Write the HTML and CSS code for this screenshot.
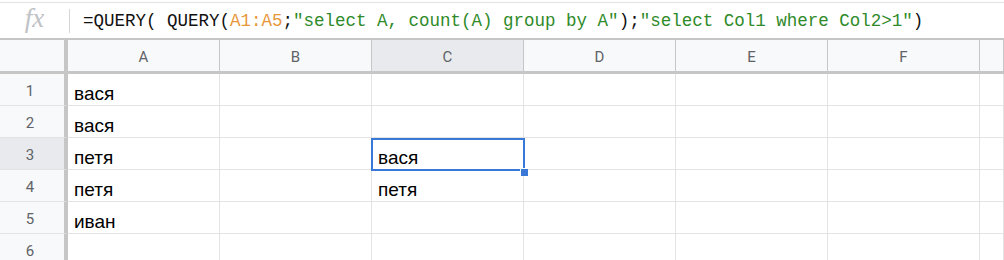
FILE: index.html
```html
<!DOCTYPE html>
<html lang="ru">
<head>
  <meta charset="UTF-8">
  <title>Sheet</title>
  <link rel="stylesheet" href="styles.css">
</head>
<body>
  <div class="formula-bar">
    <div class="fx">fx</div>
    <span class="divider"></span>
    <div class="formula">=QUERY( QUERY(<span class="ref">A1:A5</span>;<span class="str">"select A, count(A) group by A"</span>);<span class="str">"select Col1 where Col2&gt;1"</span>)</div>
  </div>

  <div class="sheet">
    <div class="corner"></div>
    <div class="col-head">A</div>
    <div class="col-head">B</div>
    <div class="col-head active">C</div>
    <div class="col-head">D</div>
    <div class="col-head">E</div>
    <div class="col-head">F</div>
    <div class="col-head"></div>

    <div class="row-head">1</div>
    <div class="cell">вася</div><div class="cell"></div><div class="cell"></div><div class="cell"></div><div class="cell"></div><div class="cell"></div><div class="cell"></div>

    <div class="row-head">2</div>
    <div class="cell">вася</div><div class="cell"></div><div class="cell"></div><div class="cell"></div><div class="cell"></div><div class="cell"></div><div class="cell"></div>

    <div class="row-head active">3</div>
    <div class="cell">петя</div><div class="cell"></div><div class="cell selected">вася<span class="handle"></span></div><div class="cell"></div><div class="cell"></div><div class="cell"></div><div class="cell"></div>

    <div class="row-head">4</div>
    <div class="cell">петя</div><div class="cell"></div><div class="cell">петя</div><div class="cell"></div><div class="cell"></div><div class="cell"></div><div class="cell"></div>

    <div class="row-head">5</div>
    <div class="cell">иван</div><div class="cell"></div><div class="cell"></div><div class="cell"></div><div class="cell"></div><div class="cell"></div><div class="cell"></div>

    <div class="row-head">6</div>
    <div class="cell"></div><div class="cell"></div><div class="cell"></div><div class="cell"></div><div class="cell"></div><div class="cell"></div><div class="cell"></div>
  </div>
</body>
</html>
```

FILE: styles.css
```css
body { margin: 0; background: #fff; font-family: "Liberation Sans", Arial, sans-serif; overflow: hidden; }

.formula-bar {
  display: flex;
  align-items: center;
  margin-top: 2px;
  height: 35px;
  border-top: 1px solid #e3e3e3;
  border-bottom: 2px solid #c6c6c6;
}
.fx {
  width: 69px;
  text-align: center;
  font-family: "Liberation Serif", serif;
  font-style: italic;
  font-size: 27px;
  color: #bfc2c6;
  margin-top: -4px;
}
.divider { width: 1px; height: 24px; background: #d6d6d6; }
.formula {
  padding-left: 13px;
  font-family: "Liberation Mono", monospace;
  font-size: 17.5px;
  color: #111;
  white-space: pre;
}
.ref { color: #e8963a; }
.str { color: #2f8a2a; }

.sheet {
  display: grid;
  grid-template-columns: 68px repeat(6, 152px) 1fr;
  grid-template-rows: 34px repeat(6, 32px);
}
.sheet > div { box-sizing: border-box; }

.corner, .col-head, .row-head { background: #f8f9fa; color: #5f6368; font-family: Roboto, "Liberation Sans", sans-serif; font-size: 15px; }
.corner { border-right: 4px solid #c6c6c6; border-bottom: 3px solid #c6c6c6; }
.col-head {
  display: flex; align-items: center; justify-content: center;
  padding-top: 3px;
  border-right: 1px solid #c6c6c6;
  border-bottom: 3px solid #c6c6c6;
}
.row-head {
  display: flex; align-items: center; justify-content: center;
  padding: 3px 4px 0 0;
  border-right: 4px solid #c6c6c6;
  border-bottom: 1px solid #e2e3e3;
}
.col-head.active, .row-head.active { background: #e8eaed; }

.cell {
  display: flex; align-items: flex-end;
  padding: 0 6px 0;
  font-size: 19px;
  color: #000;
  border-right: 1px solid #e2e3e3;
  border-bottom: 1px solid #e2e3e3;
}
.cell.selected { position: relative; }
.cell.selected::before {
  content: "";
  position: absolute;
  top: 0; left: -1px; right: -2px; bottom: -2px;
  border: 2px solid #3a78d8;
}
.handle {
  position: absolute;
  right: -5px; bottom: -7px;
  width: 7px; height: 7px;
  background: #3a78d8;
  border-left: 1px solid #fff;
  border-top: 1px solid #fff;
  z-index: 1;
}
```
